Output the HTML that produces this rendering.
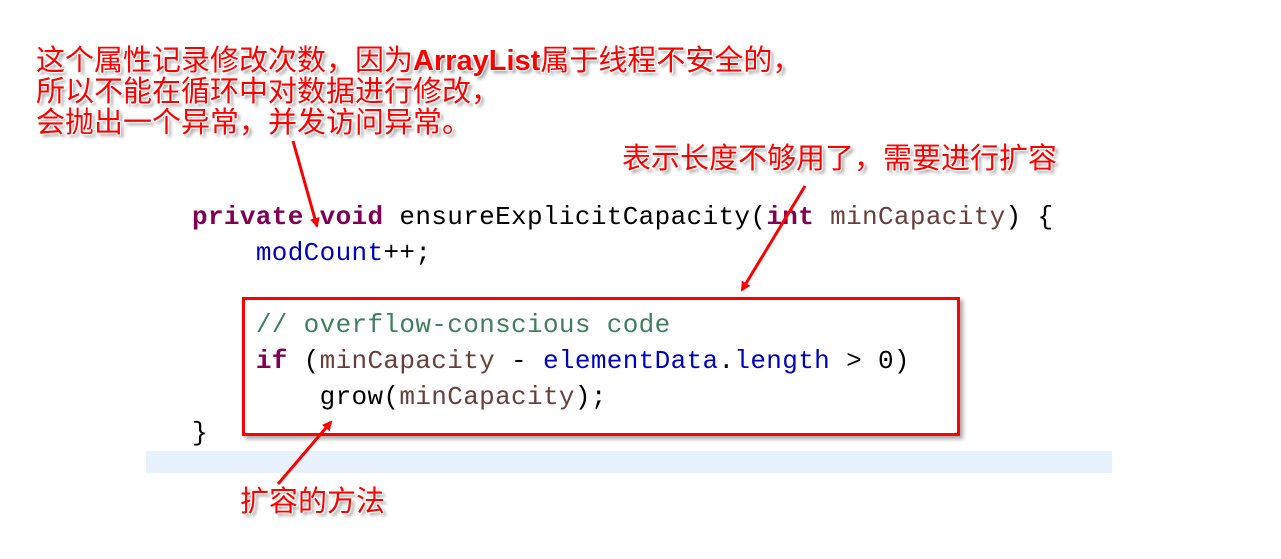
<!DOCTYPE html>
<html><head><meta charset="utf-8"><style>
body{margin:0;width:1281px;height:559px;background:#fff;position:relative;overflow:hidden}
.ann{position:absolute;color:#f00;font-family:"Liberation Sans","Noto Sans CJK SC",sans-serif;font-size:29px;line-height:31px;white-space:nowrap;
text-shadow:0 0 2px #fff,1px 1px 0 #fff,-1px -1px 0 #fff,1px -1px 0 #fff,-1px 1px 0 #fff,3px 3px 3px #999}
.ann b{font-weight:bold}
.code{position:absolute;font-family:"Liberation Mono","DejaVu Sans Mono",monospace;font-size:26px;letter-spacing:0.35px;line-height:36px;white-space:pre;color:#000}
.kw{color:#7f0055;font-weight:bold}.pm{color:#6a3e3e}.fd{color:#0000c0}.cm{color:#3f7f5f}
</style></head><body>
<div style="position:absolute;left:146px;top:451px;width:966px;height:22px;background:#e8f2fe"></div>
<div style="position:absolute;left:242px;top:297px;width:712px;height:133px;border:3px solid #f00;box-shadow:3px 3px 4px rgba(0,0,0,.35)"></div>
<div class="code" style="left:192px;top:199px"><span class="kw">private</span> <span class="kw">void</span> ensureExplicitCapacity(<span class="kw">int</span> <span class="pm">minCapacity</span>) {
    <span class="fd">modCount</span>++;

    <span class="cm">// overflow-conscious code</span>
    <span class="kw">if</span> (<span class="pm">minCapacity</span> - <span class="fd">elementData</span>.<span class="fd">length</span> &gt; 0)
        grow(<span class="pm">minCapacity</span>);
}</div>
<div class="ann" style="left:36px;top:46px">这个属性记录修改次数，因为<b>ArrayList</b>属于线程不安全的，<br>所以不能在循环中对数据进行修改，<br>会抛出一个异常，并发访问异常。</div>
<div class="ann" style="left:622px;top:144px">表示长度不够用了，需要进行扩容</div>
<div class="ann" style="left:240px;top:487px">扩容的方法</div>
<svg width="1281" height="559" style="position:absolute;left:0;top:0">
<defs><marker id="a" markerWidth="10" markerHeight="10" refX="8" refY="5" orient="auto" markerUnits="userSpaceOnUse"><path d="M0,0 L10,5 L0,10 z" fill="#f00"/></marker></defs>
<g stroke="#f00" stroke-width="3" marker-end="url(#a)" fill="none">
<line x1="293" y1="141" x2="317" y2="226"/>
<line x1="805" y1="186" x2="742" y2="290"/>
<line x1="278" y1="484" x2="331" y2="422"/>
</g>
</svg>
</body></html>
